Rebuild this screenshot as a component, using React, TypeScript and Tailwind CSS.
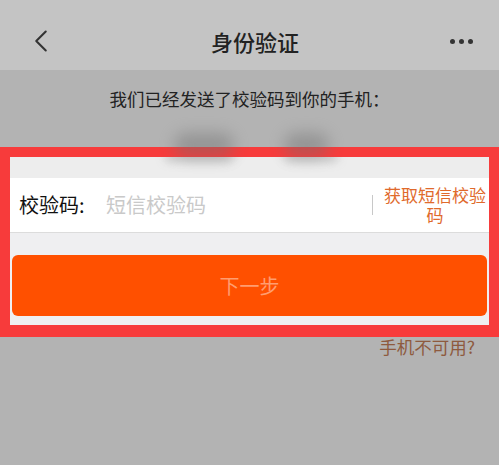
import { ChevronLeft } from "lucide-react";

export default function App() {
  return (
    <div
      className="w-[499px] h-[465px] overflow-hidden bg-[#b3b3b3] text-[#222]"
      style={{ fontFamily: '"Noto Sans CJK SC", "Noto Sans", sans-serif' }}
    >
      {/* header */}
      <div className="h-[70px] bg-[#c4c4c4] flex items-center justify-between pt-[12px] pl-[22px] pr-[26px]">
        <ChevronLeft className="w-[38px] h-[38px] text-[#333]" strokeWidth={1.3} />
        <div className="text-[22px] font-medium text-[#222] leading-none">身份验证</div>
        <div className="flex gap-[4px] items-center">
          <span className="w-[5px] h-[5px] rounded-full bg-[#333]" />
          <span className="w-[5px] h-[5px] rounded-full bg-[#333]" />
          <span className="w-[5px] h-[5px] rounded-full bg-[#333]" />
        </div>
      </div>

      <div className="mt-[17px] text-center text-[17.5px] leading-[24px] text-[#222]">
        我们已经发送了校验码到你的手机：
      </div>

      {/* blurred phone number */}
      <div className="h-[18px] mt-[18px] flex justify-center gap-[50px] pl-[4px]">
        <div className="w-[60px] h-[24px] mt-[4px] rounded-full bg-[#6e6e6e] blur-[8px] opacity-45" />
        <div className="w-[45px] h-[24px] mt-[4px] rounded-full bg-[#6e6e6e] blur-[8px] opacity-45" />
      </div>

      {/* highlighted frame */}
      <div className="border-[10px] border-b-[12px] border-[#f73b3b]">
        <div className="h-[21px] bg-[#ededed] flex justify-center gap-[50px] pl-[4px] overflow-hidden">
          <div className="w-[70px] h-[10px] -mt-[5px] rounded-full bg-[#9a9a9a] blur-[5px] opacity-40" />
          <div className="w-[55px] h-[10px] -mt-[5px] rounded-full bg-[#9a9a9a] blur-[5px] opacity-40" />
        </div>
        <div className="h-[55px] bg-white border-b border-[#dcdcdc] flex items-center pl-[9px]">
          <span className="text-[20px] text-[#111] w-[87px]">校验码:</span>
          <span className="text-[20px] text-[#c9c9c9] flex-1">短信校验码</span>
          <span className="w-px h-[20px] bg-[#c8c8c8] mr-[8px]" />
          <span className="w-[108px] text-center text-[17px] leading-[20px] text-[#e06a2c]">
            获取短信校验码
          </span>
        </div>
        <div className="bg-[#efeff1] pt-[22px] pb-[9px] px-[2px]">
          <div className="h-[61px] rounded-[6px] bg-[#ff5000] flex items-center justify-center text-[20px] text-[#ff9d70]">
            下一步
          </div>
        </div>
      </div>

      <div className="text-right pr-[24px] text-[17.5px] leading-[20px] text-[#8e5a3e]">手机不可用?</div>
    </div>
  );
}
